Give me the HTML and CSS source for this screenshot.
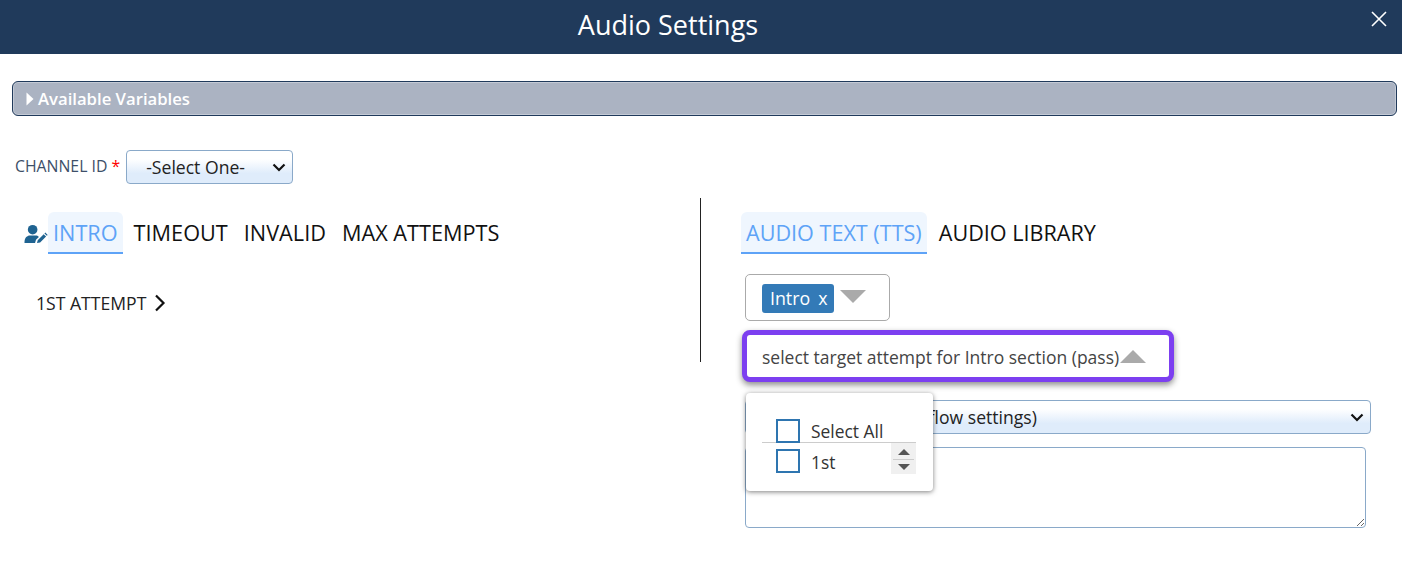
FILE: index.html
```html
<!DOCTYPE html>
<html lang="en">
<head>
<meta charset="utf-8">
<title>Audio Settings</title>
<link rel="stylesheet" href="styles.css">
</head>
<body>
<header class="modal-head">
  <h1 class="modal-title">Audio Settings</h1>
  <button class="close-btn" aria-label="Close">
    <svg width="16" height="16" viewBox="0 0 16 16"><path d="M1 1 L15 15 M15 1 L1 15" stroke="#fff" stroke-width="1.6" fill="none"/></svg>
  </button>
</header>
<main class="modal-body">
  <div class="vars-bar">
    <svg class="vars-caret" width="8" height="14" viewBox="0 0 8 14"><path d="M0.5 0.5 L7.5 7 L0.5 13.5 Z" fill="#fff"/></svg>
    <span>Available Variables</span>
  </div>
  <div class="channel-row">
    <label class="channel-label">CHANNEL ID <span class="req">*</span></label>
    <span class="select-wrap">
      <select class="blue-select channel-select"><option>-Select One-</option></select>
      <svg class="select-chevron" width="14" height="9" viewBox="0 0 14 9"><path d="M1.5 1.5 L7 7 L12.5 1.5" stroke="#111" stroke-width="2.2" fill="none"/></svg>
    </span>
  </div>
  <div class="columns">
    <section class="col-left">
      <nav class="tabs">
        <svg class="user-icon" width="24" height="22" viewBox="0 0 25 22">
          <circle cx="9" cy="6.5" r="5" fill="#1f6391"/>
          <path d="M0.5 20 C0.5 14.5 3.5 12.5 6 12.5 L12 12.5 C13.5 12.5 14.5 13 15.5 14 L12.5 17 L11.5 20.5 L2 20.5 C1 20.5 0.5 20.5 0.5 20 Z" fill="#1f6391"/>
          <path d="M13.5 20.5 L14.3 17.4 L20.5 11.2 L23 13.7 L16.8 19.9 Z M21.3 10.4 L22.2 9.5 L24.7 12 L23.8 12.9 Z" fill="#1f6391"/>
        </svg>
        <a class="tab active">INTRO</a>
        <a class="tab">TIMEOUT</a>
        <a class="tab">INVALID</a>
        <a class="tab">MAX ATTEMPTS</a>
      </nav>
      <div class="attempt">
        <span>1ST ATTEMPT</span>
        <svg width="12" height="18" viewBox="0 0 12 18"><path d="M2 1.5 L9.5 9 L2 16.5" stroke="#111" stroke-width="2.2" fill="none"/></svg>
      </div>
    </section>
    <section class="col-right">
      <nav class="tabs tabs-right">
        <a class="tab active">AUDIO TEXT (TTS)</a>
        <a class="tab">AUDIO LIBRARY</a>
      </nav>
      <div class="chips-box">
        <span class="chip">Intro<span class="chip-x">x</span></span>
        <span class="tri-down"></span>
      </div>
      <div class="target-wrap">
        <div class="target-box">
          <span class="target-text">select target attempt for Intro section (pass)</span>
          <span class="tri-up"></span>
        </div>
        <div class="popup">
          <div class="popup-row popup-row-all">
            <span class="check"></span><span>Select All</span>
          </div>
          <div class="popup-row">
            <span class="check"></span><span>1st</span>
            <span class="spinner"><i class="spin-up"></i><i class="spin-line"></i><i class="spin-down"></i></span>
          </div>
        </div>
      </div>
      <span class="select-wrap voice-wrap">
        <select class="blue-select voice-select"><option>Select voice (use flow settings)</option></select>
        <svg class="select-chevron" width="14" height="9" viewBox="0 0 14 9"><path d="M1.5 1.5 L7 7 L12.5 1.5" stroke="#111" stroke-width="2.2" fill="none"/></svg>
      </span>
      <textarea class="tts-area"></textarea>
    </section>
  </div>
</main>
</body>
</html>
```
FILE: styles.css
```css
* { box-sizing: border-box; }
html, body { margin: 0; padding: 0; }
body {
  width: 1402px;
  height: 565px;
  overflow: hidden;
  background: #fff;
  font-family: "Open Sans", sans-serif;
  color: #333;
}
.modal-head {
  height: 54px;
  background: #203a5b;
  display: flex;
  align-items: center;
  justify-content: center;
  position: relative;
  padding-right: 66px;
}
.modal-title {
  margin: 0;
  font-size: 27px;
  font-weight: 400;
  color: #fff;
  line-height: 50px;
  padding-bottom: 5px;
}
.close-btn {
  position: absolute;
  right: 15px;
  top: 11px;
  width: 16px;
  height: 16px;
  padding: 0;
  border: 0;
  background: none;
  display: block;
  line-height: 0;
}
.modal-body { padding: 27px 5px 0 12px; }
.vars-bar {
  height: 35px;
  background: #abb3c2;
  border: 1px solid #203a5b;
  border-radius: 6px;
  box-shadow: inset 0 0 0 1px #c4cad5;
  display: flex;
  align-items: center;
  padding-left: 13px;
  color: #fff;
  font-size: 16.7px;
  font-weight: 600;
  gap: 4px;
}
.vars-caret { flex: none; }
.channel-row {
  display: flex;
  align-items: center;
  margin-top: 34px;
  padding-left: 3px;
  height: 34px;
}
.channel-label {
  font-size: 15.8px;
  color: #3d4f69;
  margin-right: 6px;
  padding-bottom: 2px;
}
.req { color: #f00; }
.select-wrap {
  position: relative;
  display: block;
  line-height: 0;
}
.select-chevron {
  position: absolute;
  right: 7px;
  top: 13px;
  pointer-events: none;
}
.blue-select {
  appearance: none;
  display: block;
  font-family: "Open Sans", sans-serif;
  font-size: 17.6px;
  color: #222;
  border: 1px solid #8aa9c9;
  border-radius: 4px;
  background: linear-gradient(#fff 0%, #fff 25%, #dfecfb 70%, #dfecfb 100%);
}
.channel-select {
  width: 167px;
  height: 34px;
  padding-left: 19px;
}
.columns {
  display: flex;
  margin-top: 14px;
}
.col-left {
  width: 689px;
  height: 164px;
  border-right: 1px solid #222;
  padding-top: 14px;
}
.col-right {
  padding-left: 40px;
  padding-top: 14px;
  flex: 1;
  display: flex;
  flex-direction: column;
  align-items: flex-start;
}
.tabs {
  display: flex;
  align-items: flex-start;
  padding-left: 12px;
  height: 42px;
}
.tabs-right { padding-left: 0; }
.user-icon { flex: none; margin-top: 11px; }
.tab {
  display: block;
  height: 42px;
  padding: 5px 5px 0;
  margin-right: 6px;
  font-size: 21.7px;
  line-height: 32px;
  color: #111;
  border-radius: 6px 6px 0 0;
  white-space: nowrap;
}
.tab.active {
  color: #5ea3f7;
  background: #eff6fe;
  border-bottom: 2px solid #5ea3f7;
}
.tabs-right .tab { margin-right: 7px; font-size: 21.6px; }
.attempt {
  display: flex;
  align-items: center;
  gap: 8px;
  margin-top: 37px;
  padding-left: 24px;
  font-size: 17.6px;
  line-height: 24px;
  color: #222;
}
.chips-box {
  width: 145px;
  height: 47px;
  margin-top: 20px;
  margin-left: 4px;
  border: 1px solid #aaa;
  border-radius: 5px;
  display: flex;
  align-items: flex-start;
  padding: 9px 0 0 16px;
}
.chip {
  background: #337ab7;
  color: #fff;
  border-radius: 3px;
  height: 29px;
  width: 72px;
  padding-left: 8px;
  font-size: 17.8px;
  line-height: 29px;
  display: flex;
  gap: 8px;
}
.tri-down {
  width: 0;
  height: 0;
  margin: 6px 0 0 6px;
  border-left: 13.5px solid transparent;
  border-right: 13.5px solid transparent;
  border-top: 13px solid #aaa;
}
.target-wrap {
  position: relative;
  margin-top: 9px;
  margin-left: 1px;
}
.target-box {
  width: 432px;
  height: 52px;
  border: 5px solid #7c3ff0;
  border-radius: 8px;
  background: #fff;
  box-shadow: 0 3px 6px rgba(0,0,0,.45);
  display: flex;
  align-items: center;
  padding-left: 15px;
  font-size: 17.5px;
  color: #444;
  white-space: nowrap;
}
.target-text { margin-top: 2px; }
.tri-up {
  width: 0;
  height: 0;
  border-left: 13.5px solid transparent;
  border-right: 13.5px solid transparent;
  border-bottom: 13.5px solid #aaa;
  margin: 1px 0 0 1px;
}
.popup {
  position: absolute;
  left: 4px;
  top: 63px;
  width: 187px;
  height: 98px;
  background: #fff;
  border-radius: 4px;
  box-shadow: 0 1px 5px rgba(0,0,0,.5);
  padding: 26px 17px 0 16px;
  font-size: 17.4px;
  color: #333;
  z-index: 2;
}
.popup-row {
  display: flex;
  align-items: flex-start;
  position: relative;
  height: 31px;
  padding-left: 14px;
  gap: 11px;
  line-height: 26px;
}
.popup-row-all {
  height: 24px;
  line-height: 24px;
  border-bottom: 1px solid #ccc;
}
.popup-row-all + .popup-row { padding-top: 6px; height: 31px; }
.check {
  width: 24px;
  height: 24px;
  flex: none;
  border: 2px solid #2e75b0;
  background: #fff;
}
.spinner {
  position: absolute;
  right: 0;
  top: 0;
  width: 25px;
  height: 31px;
  background: #f0f0f0;
  display: flex;
  flex-direction: column;
  align-items: center;
  padding-top: 6px;
}
.spin-up {
  width: 0; height: 0;
  border-left: 6px solid transparent;
  border-right: 6px solid transparent;
  border-bottom: 6px solid #555;
}
.spin-line { width: 21px; height: 1px; background: #ccc; margin: 4px 0; }
.spin-down {
  width: 0; height: 0;
  border-left: 6px solid transparent;
  border-right: 6px solid transparent;
  border-top: 6px solid #555;
}
.voice-wrap {
  margin-top: 18px;
  margin-left: 4px;
}
.voice-select {
  width: 626px;
  height: 34px;
  padding-left: 44px;
}
.tts-area {
  display: block;
  width: 621px;
  height: 81px;
  margin-top: 13px;
  margin-left: 4px;
  border: 1px solid #8aa9c9;
  border-radius: 4px;
  background: #fff;
}
```
